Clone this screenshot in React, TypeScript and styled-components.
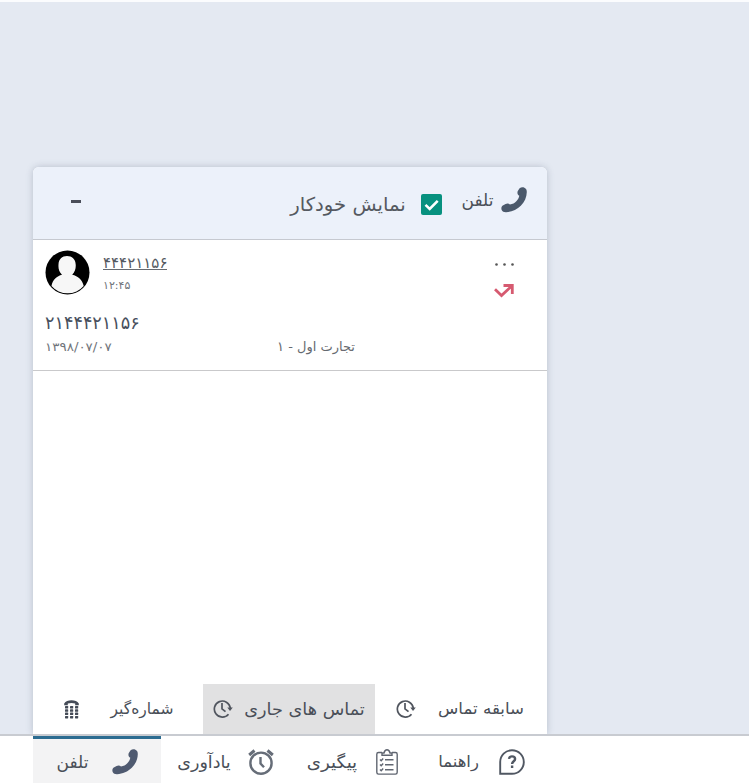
import React from 'react';
import styled, { createGlobalStyle } from 'styled-components';

const GlobalStyle = createGlobalStyle`
  * { box-sizing: border-box; }
  body { margin: 0; background: #e4e9f2; font-family: "DejaVu Sans", "Noto Sans", sans-serif; color: #4a4f58; }
  svg { display: block; flex: none; }
`;

const Page = styled.div`
  height: 783px;
  border-top: 2px solid #fbfcfe;
  padding-top: 165px;
  display: flex;
  flex-direction: column;
  overflow: hidden;
`;
const Panel = styled.section`
  width: 514px;
  height: 567px;
  margin-left: 33px;
  background: #fff;
  border-radius: 6px 6px 0 0;
  box-shadow: 0 0 7px rgba(90, 100, 125, 0.32);
  display: flex;
  flex-direction: column;
`;
const Header = styled.header`
  height: 73px;
  flex: none;
  background: #ecf1fa;
  border-bottom: 1px solid #c6c9d0;
  border-radius: 6px 6px 0 0;
  display: flex;
  align-items: flex-start;
  padding: 20px 20px 0 38px;
`;
const Minimize = styled.button`
  width: 10px;
  height: 3px;
  margin-top: 13px;
  border: 0;
  padding: 0;
  background: #4a4e59;
`;
const Label = styled.span<{ $w: number; $size: number; $stretch?: number; $top?: number; $color?: string }>`
  direction: rtl;
  display: flex;
  justify-content: center;
  flex: none;
  white-space: nowrap;
  width: ${p => p.$w}px;
  font-size: ${p => p.$size}px;
  line-height: 24px;
  margin-top: ${p => p.$top ?? 0}px;
  color: ${p => p.$color ?? '#4a4f58'};
  transform: scaleX(${p => p.$stretch ?? 1});
`;
const Gap = styled.span<{ $w: number }>`
  flex: 0 0 ${p => p.$w}px;
`;
const Spacer = styled.span`
  flex: 1;
`;
const Check = styled.span`
  width: 21px;
  height: 21px;
  margin-top: 7px;
  flex: none;
  border-radius: 2px;
  background: #07917f;
`;
const Call = styled.article`
  height: 131px;
  flex: none;
  border-bottom: 1px solid #c9c9cb;
  padding: 10px 33px 0 12px;
`;
const CallTop = styled.div`
  display: flex;
  height: 59px;
`;
const CallInfo = styled.div`
  margin-left: 13px;
  padding-top: 7px;
  flex: 1;
`;
const Digits = styled.div<{ $size: number; $line: number; $stretch?: number; $color?: string; $underline?: boolean }>`
  font-size: ${p => p.$size}px;
  line-height: ${p => p.$line}px;
  width: max-content;
  white-space: nowrap;
  color: ${p => p.$color ?? '#555a62'};
  border-bottom: ${p => (p.$underline ? '1px solid #666a70' : '0')};
  transform: scaleX(${p => p.$stretch ?? 1});
  transform-origin: 0 0;
`;
const CallActions = styled.div`
  padding-top: 13px;
  display: flex;
  flex-direction: column;
  align-items: center;
  gap: 18px;
`;
const CallBottom = styled.div`
  display: flex;
  align-items: center;
  margin-top: -1px;
`;
const Tabs = styled.nav`
  margin-top: auto;
  height: 50px;
  display: flex;
`;
const Tab = styled.div<{ $w: number; $pad: number; $active?: boolean }>`
  width: ${p => p.$w}px;
  padding-left: ${p => p.$pad}px;
  display: flex;
  align-items: center;
  background: ${p => (p.$active ? '#e1e1e2' : 'transparent')};
`;
/* Opaque bar stacked above the panel so the panel's shadow ends at its top edge. */
const BottomBar = styled.footer`
  height: 49px;
  flex: none;
  position: relative;
  background: #fff;
  border-top: 2px solid #c8cbd1;
  display: flex;
  padding-left: 33px;
`;
const BarItem = styled.div<{ $w: number; $pad: number; $active?: boolean }>`
  width: ${p => p.$w}px;
  padding-left: ${p => p.$pad}px;
  padding-top: ${p => (p.$active ? 2 : 5)}px;
  display: flex;
  align-items: center;
  border-top: ${p => (p.$active ? '3px solid #2c6c91' : '0')};
  background: ${p => (p.$active ? '#f3f3f4' : 'transparent')};
`;

const PhoneIcon = ({ color = '#4b596b' }: { color?: string }) => (
  <svg width="26" height="26" viewBox="0 0 26 26" fill={color}>
    <path d="M18.6 1.2 C20 .2 22 .1 23.4 .7 C25.1 1.4 25.8 2.8 25.8 4.9 C25.7 10.2 23.6 15 19.8 18.8 C16 22.6 10.5 25 5.2 25.2 C3 25.3 1.4 24.6 .7 23 C0 21.3 .4 19.6 1.8 18.6 L4.6 16.9 C6.2 16 8 16.3 9 17.6 C11.6 17.2 13.7 16 15.3 14.3 C16.9 12.7 17.9 10.8 18.3 8.8 C16.5 7.7 16 5.9 16.8 4.1Z" />
  </svg>
);
const HistoryIcon = () => (
  <svg width="20" height="20" viewBox="0 0 20 20" fill="none" stroke="#50555e" strokeWidth="1.7">
    <path d="M15.5 15.2 A8 8 0 1 1 17.3 9" />
    <path d="M9 4V9.8L12.5 12.6" />
    <path d="M14.3 8.5H19.8L17 12Z" fill="#50555e" stroke="none" />
  </svg>
);
const DialIcon = () => (
  <svg width="15" height="19" viewBox="0 0 15 19" fill="#444b57">
    <path d="M.2 5.2V3.4C1.5 1.2 4.3.2 7.5.2S13.5 1.2 14.8 3.4V5.2H11.2V3.5C9 2.7 6 2.7 3.8 3.5V5.2Z" />
    {[6, 9.3, 12.6, 15.9].map(y => [1, 6, 11].map(x => <rect key={`${x}-${y}`} x={x} y={y} width="3.2" height="2.5" rx=".6" />))}
  </svg>
);
const AlarmIcon = () => (
  <svg width="26" height="26" viewBox="0 0 26 26" fill="none" stroke="#666d78" strokeWidth="2.4">
    <circle cx="13" cy="14.2" r="10.6" />
    <path d="M12.5 8V14.5L16 18.3" />
    <path d="M1.2 6L6.5 1.5M24.8 6L19.5 1.5" strokeWidth="3" />
  </svg>
);
const ClipboardIcon = () => (
  <svg width="22" height="26" viewBox="0 0 22 26" fill="none" stroke="#606671" strokeWidth="1.4">
    <path d="M6 3.5H2.5C1.4 3.5.8 4.2.8 5.2V23.3C.8 24.4 1.5 25.1 2.5 25.1H19.5C20.5 25.1 21.2 24.4 21.2 23.3V5.2C21.2 4.2 20.5 3.5 19.5 3.5H16" />
    <path d="M6 6.2V4H8C8.5 1.8 9.6.8 11 .8S13.5 1.8 14 4H16V6.2Z" />
    <path d="M4 10.5L5.2 11.7L7.2 9.5M9 10.7H17.5M4 15.5L5.2 16.7L7.2 14.5M9 15.7H17.5M4 20.5L5.2 21.7L7.2 19.5M9 20.7H17.5" />
  </svg>
);
const HelpIcon = () => (
  <svg width="26" height="26" viewBox="0 0 26 26" fill="none" stroke="#505762">
    <path d="M1.2 24.8V13A11.8 11.8 0 1 1 13 24.8Z" strokeWidth="1.9" />
    <path d="M10 9.9C10.2 8.2 11.4 7.4 13 7.4C14.9 7.4 16.1 8.4 16.1 10C16.1 12.3 13.1 12.2 13.1 14.9M13.1 16.6V19" strokeWidth="2.4" />
  </svg>
);

export default function App() {
  return (
    <Page>
      <GlobalStyle />
      <Panel>
        <Header>
          <Minimize aria-label="-" />
          <Spacer />
          <Label $w={116} $size={19} $top={5} $stretch={1.035} $color="#555960">نمایش خودکار</Label>
          <Gap $w={15} />
          <Check>
            <svg width="21" height="21" viewBox="0 0 21 21" fill="none" stroke="#fff" strokeWidth="2.6"><path d="M4.5 10.8L8.7 15L16.7 6.8" /></svg>
          </Check>
          <Gap $w={19} />
          <Label $w={33} $size={17} $top={1}>تلفن</Label>
          <Gap $w={7} />
          <PhoneIcon />
        </Header>
        <Call>
          <CallTop>
            <svg width="45" height="45" viewBox="0 0 45 45">
              <circle cx="22.5" cy="22.5" r="22" fill="#000" />
              <path d="M6.5 36 C7.5 29.5 12 26 17 24.7 C14 22 13.2 18.5 13.5 14.5 C13.8 9 17 6 22 6 S30.4 9 30.7 14.5 C31 18.5 30 22 27.2 24.7 C33 26 37.3 29.5 38.7 36 A21.3 21.3 0 0 1 6.5 36Z" fill="#f7f7f7" />
            </svg>
            <CallInfo>
              <Digits $size={15} $line={12} $underline>۴۴۴۲۱۱۵۶</Digits>
              <Digits $size={11} $line={31} $color="#70747a">۱۲:۴۵</Digits>
            </CallInfo>
            <CallActions>
              <svg width="19" height="3" viewBox="0 0 19 3" fill="#555"><circle cx="1.5" cy="1.5" r="1.3" /><circle cx="9.5" cy="1.5" r="1.3" /><circle cx="17.5" cy="1.5" r="1.3" /></svg>
              <svg width="20" height="14" viewBox="0 0 20 14" fill="none" stroke="#d65a70" strokeWidth="2.8"><path d="M1 5.3L7.5 11.5L17.5 2.2M9.5 1.5H18.3V10" /></svg>
            </CallActions>
          </CallTop>
          <Digits $size={18} $line={27} $stretch={0.98} $color="#48505d">۲۱۴۴۴۲۱۱۵۶</Digits>
          <CallBottom>
            <Digits $size={12} $line={22} $stretch={1.12} $color="#70747a">۱۳۹۸/۰۷/۰۷</Digits>
            <Spacer />
            <Label $w={76} $size={13} $color="#666a70">تجارت اول - ۱</Label>
            <Gap $w={160} />
          </CallBottom>
        </Call>
        <Tabs>
          <Tab $w={170} $pad={31}><DialIcon /><Gap $w={32} /><Label $w={62} $size={16} $stretch={0.97}>شماره‌گیر</Label></Tab>
          <Tab $w={172} $pad={10} $active><HistoryIcon /><Gap $w={11} /><Label $w={121} $size={17} $stretch={1.04}>تماس های جاری</Label></Tab>
          <Tab $w={172} $pad={21}><HistoryIcon /><Gap $w={22} /><Label $w={86} $size={16} $stretch={1.04}>سابقه تماس</Label></Tab>
        </Tabs>
      </Panel>
      <BottomBar>
        <BarItem $w={128} $pad={23} $active><Label $w={33} $size={17}>تلفن</Label><Gap $w={23} /><PhoneIcon color="#4f5a70" /></BarItem>
        <BarItem $w={130} $pad={16}><Label $w={54} $size={17} $stretch={1.03}>یادآوری</Label><Gap $w={17} /><AlarmIcon /></BarItem>
        <BarItem $w={130} $pad={16}><Label $w={50} $size={17} $stretch={1.07}>پیگیری</Label><Gap $w={19} /><ClipboardIcon /></BarItem>
        <BarItem $w={126} $pad={17}><Label $w={41} $size={16} $stretch={1.03}>راهنما</Label><Gap $w={20} /><HelpIcon /></BarItem>
      </BottomBar>
    </Page>
  );
}
